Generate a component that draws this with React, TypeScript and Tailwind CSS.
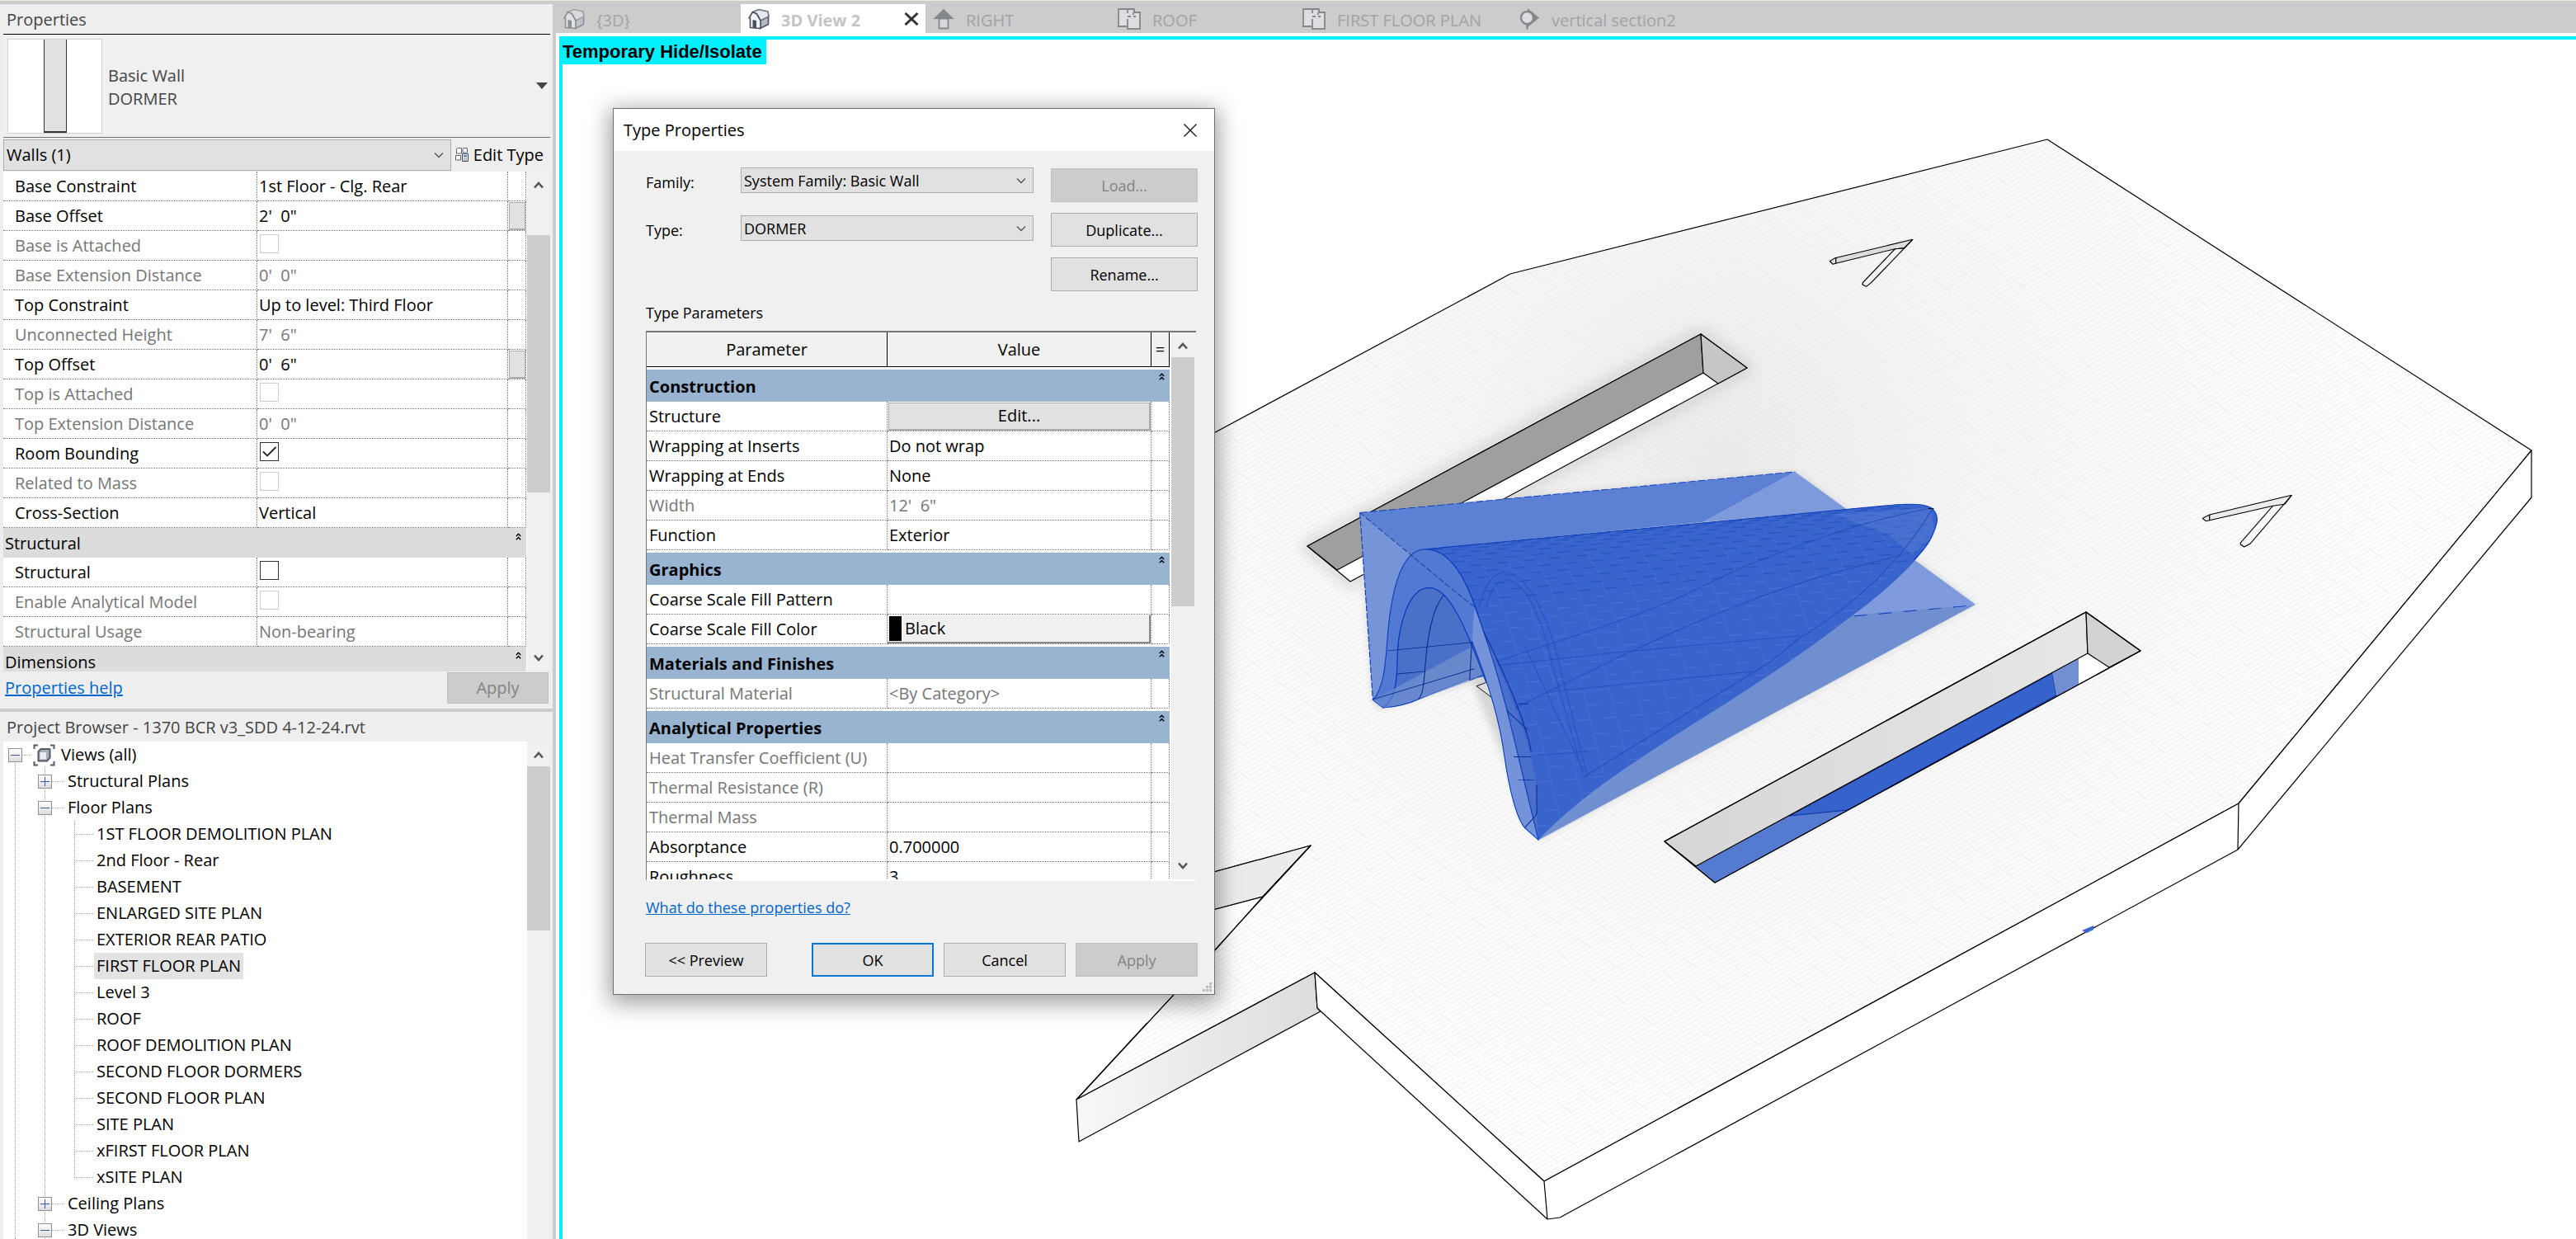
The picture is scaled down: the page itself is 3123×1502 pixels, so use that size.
import type { ReactNode } from 'react';

type Kind = 'text' | 'check' | 'button' | 'color' | 'section';

interface Param {
  name: string;
  value?: string;
  kind?: Kind;
  disabled?: boolean;
  checked?: boolean;
  /** Shows the small associate-parameter button at the row's end. */
  assoc?: boolean;
}

const INSTANCE_PARAMS: Param[] = [
  { name: 'Base Constraint', value: '1st Floor - Clg. Rear' },
  { name: 'Base Offset', value: `2'  0"`, assoc: true },
  { name: 'Base is Attached', kind: 'check', disabled: true },
  { name: 'Base Extension Distance', value: `0'  0"`, disabled: true },
  { name: 'Top Constraint', value: 'Up to level: Third Floor' },
  { name: 'Unconnected Height', value: `7'  6"`, disabled: true },
  { name: 'Top Offset', value: `0'  6"`, assoc: true },
  { name: 'Top is Attached', kind: 'check', disabled: true },
  { name: 'Top Extension Distance', value: `0'  0"`, disabled: true },
  { name: 'Room Bounding', kind: 'check', checked: true },
  { name: 'Related to Mass', kind: 'check', disabled: true },
  { name: 'Cross-Section', value: 'Vertical' },
  { name: 'Structural', kind: 'section' },
  { name: 'Structural', kind: 'check' },
  { name: 'Enable Analytical Model', kind: 'check', disabled: true },
  { name: 'Structural Usage', value: 'Non-bearing', disabled: true },
  { name: 'Dimensions', kind: 'section' },
];

const TYPE_PARAMS: Param[] = [
  { name: 'Construction', kind: 'section' },
  { name: 'Structure', value: 'Edit...', kind: 'button' },
  { name: 'Wrapping at Inserts', value: 'Do not wrap' },
  { name: 'Wrapping at Ends', value: 'None' },
  { name: 'Width', value: `12'  6"`, disabled: true },
  { name: 'Function', value: 'Exterior' },
  { name: 'Graphics', kind: 'section' },
  { name: 'Coarse Scale Fill Pattern' },
  { name: 'Coarse Scale Fill Color', value: 'Black', kind: 'color' },
  { name: 'Materials and Finishes', kind: 'section' },
  { name: 'Structural Material', value: '<By Category>', disabled: true },
  { name: 'Analytical Properties', kind: 'section' },
  { name: 'Heat Transfer Coefficient (U)', disabled: true },
  { name: 'Thermal Resistance (R)', disabled: true },
  { name: 'Thermal Mass', disabled: true },
  { name: 'Absorptance', value: '0.700000' },
  { name: 'Roughness', value: '3' },
];

const FLOOR_PLANS = [
  '1ST FLOOR DEMOLITION PLAN',
  '2nd Floor - Rear',
  'BASEMENT',
  'ENLARGED SITE PLAN',
  'EXTERIOR REAR PATIO',
  'FIRST FLOOR PLAN',
  'Level 3',
  'ROOF',
  'ROOF DEMOLITION PLAN',
  'SECOND FLOOR DORMERS',
  'SECOND FLOOR PLAN',
  'SITE PLAN',
  'xFIRST FLOOR PLAN',
  'xSITE PLAN',
];

const DOTS_H =
  'bg-[repeating-linear-gradient(90deg,#999_0_1px,transparent_1px_2px)] h-px';
const DOTS_V =
  'bg-[repeating-linear-gradient(180deg,#999_0_1px,transparent_1px_2px)] w-px';

/* ---------- small icons ---------- */

function Chevron({ up }: { up?: boolean }) {
  return (
    <svg viewBox="0 0 12 9" className="h-[9px] w-3" fill="none" aria-hidden="true">
      <path d={up ? 'M1 7.5 6 2l5 5.5' : 'M1 1.5 6 7l5-5.5'} stroke="#555" strokeWidth="2.6" />
    </svg>
  );
}

function DoubleUp() {
  return (
    <svg viewBox="0 0 7 9" className="h-[9px] w-[7px]" fill="none" aria-hidden="true">
      <path d="M.8 4 3.5 1.2 6.2 4M.8 8.2 3.5 5.4l2.7 2.8" stroke="#000" strokeWidth="1.4" />
    </svg>
  );
}

function HouseIcon({ faded }: { faded?: boolean }) {
  return (
    <svg viewBox="0 0 26 26" className={`h-[26px] w-[26px] shrink-0 ${faded ? 'opacity-50' : ''}`} aria-hidden="true">
      <path d="M14.5 14 24.5 9V19.5L14.5 24.5Z" fill="#b4bac6" stroke="#4a5260" strokeWidth="1.6" />
      <path d="M5.5 4.5 13 1.5 24 4 25 10 15 15 10.5 7Z" fill="#e6e8ed" stroke="#6c7482" strokeWidth="1.6" strokeLinejoin="round" />
      <path d="M1 12 5.5 4.5 10.5 7 15 15V24.5L2.5 23.5V12Z" fill="#f4f5f7" stroke="#4a5260" strokeWidth="1.6" strokeLinejoin="round" />
      <path d="M5.500 23.500V14L10 15V24Z" fill="#4a5260" />
    </svg>
  );
}

function ElevationIcon() {
  return (
    <svg viewBox="0 0 26 26" className="h-[26px] w-[26px] shrink-0" aria-hidden="true">
      <path d="M13 .8 25.5 13H.5Z" fill="#85888d" />
      <path d="M7.5 12.5H18.5V24.5H7.5Z" fill="#d5d7db" stroke="#85888d" strokeWidth="1.8" />
    </svg>
  );
}

function PlanIcon() {
  return (
    <svg viewBox="0 0 28 26" className="h-[26px] w-7 shrink-0" fill="none" aria-hidden="true">
      <path d="M1 1H20V5H27V25H12V22H1Z" fill="#dcdde0" stroke="#85888d" strokeWidth="1.8" />
      <path d="M12 22V13M12 2v4M12 10h4M19 10h3M19 5V8" stroke="#85888d" strokeWidth="1.8" />
    </svg>
  );
}

function SectionIcon() {
  return (
    <svg viewBox="0 0 26 26" className="h-[26px] w-[26px] shrink-0" aria-hidden="true">
      <path d="M11 0 25 11.500 11 23Z" fill="#85888d" />
      <circle cx="10.500" cy="11.500" r="7.500" fill="#dcdde0" stroke="#85888d" strokeWidth="2.400" />
      <path d="M10.500 19v6.500" stroke="#85888d" strokeWidth="2.400" />
    </svg>
  );
}

function EditTypeIcon() {
  return (
    <svg viewBox="0 0 17 17" className="h-[17px] w-[17px]" fill="#fff" stroke="#5b6472" aria-hidden="true">
      <path d="M1.500 1.500 3 .500h4.500V7h-6ZM9.500.500h5V6h-5.500V1.500ZM.500 9.500h6V15h-6Z" />
      <path d="M8.500 7.500h7v9h-7Z" stroke="#3d4654" />
      <path d="M10 9.200h4v2h-4Z" fill="#3b6fc4" stroke="none" />
      <path d="M10 13h1.500M12.500 13H14M10 15h1.500M12.500 15H14" stroke="#3d4654" />
    </svg>
  );
}

function ViewsIcon() {
  return (
    <svg viewBox="0 0 27 27" className="h-[27px] w-[27px]" fill="none" aria-hidden="true">
      <path d="M1.500 6V1.500H6M21 1.500h4.500V6M25.500 21v4.500H21M6 25.500H1.500V21" stroke="#555c66" strokeWidth="2" />
      <path d="M6.500 9 9.500 6H20.500V16.500L17 20.500H6.500Z" fill="#a9afb8" stroke="#555c66" strokeWidth="2" strokeLinejoin="round" />
      <path d="M8.500 10H16V18.500H8.500Z" fill="#e9ebee" />
    </svg>
  );
}

/* ---------- shared controls ---------- */

function ScrollBar({ thumb, openEnd }: { thumb: string; openEnd?: boolean }) {
  return (
    <div className="relative flex w-7 shrink-0 flex-col items-center justify-between bg-[#f0f0f0] py-3">
      <Chevron up />
      <div className={`absolute inset-x-0 bg-[#cdcdcd] ${thumb}`} />
      {!openEnd && <Chevron />}
    </div>
  );
}

function PushButton({
  children,
  disabled,
  primary,
  className = '',
}: {
  children: ReactNode;
  disabled?: boolean;
  primary?: boolean;
  className?: string;
}) {
  const look = disabled
    ? 'border border-[#bfbfbf] bg-[#cccccc] text-[#838383]'
    : primary
      ? 'border-2 border-[#0078d7] bg-[#e1e1e1]'
      : 'border border-[#adadad] bg-[#e1e1e1]';
  return (
    <button type="button" disabled={disabled} className={`flex h-[41px] items-center justify-center ${look} ${className}`}>
      {children}
    </button>
  );
}

function Picker({ id, label, value, className = '' }: { id: string; label?: string; value: string; className?: string }) {
  return (
    <div className={`relative ${className}`}>
      <select
        id={id}
        aria-label={label}
        defaultValue={value}
        className="h-full w-full appearance-none border border-[#adadad] bg-[#e1e1e1] pl-[3px] text-black"
      >
        <option>{value}</option>
      </select>
      <svg viewBox="0 0 12 8" className="pointer-events-none absolute inset-y-0 right-[9px] my-auto h-2 w-3" fill="none" aria-hidden="true">
        <path d="M1 1.500 6 6.500l5-5" stroke="#555" strokeWidth="1.400" />
      </svg>
    </div>
  );
}

function CheckBox({ id, param }: { id: string; param: Param }) {
  return (
    <span className="relative -top-0.5 ml-[3px] block h-[23px] w-[23px]">
      <input
        id={id}
        type="checkbox"
        defaultChecked={param.checked}
        disabled={param.disabled}
        className={`peer block h-[23px] w-[23px] appearance-none border bg-white ${
          param.disabled ? 'border-[#cccccc]' : 'border-[#333333]'
        }`}
      />
      <svg viewBox="0 0 23 23" className="pointer-events-none absolute inset-0 hidden h-[23px] w-[23px] peer-checked:block" fill="none" aria-hidden="true">
        <path d="M4 11.500 9 16.500 19.500 6" stroke="#222" strokeWidth="1.800" />
      </svg>
    </span>
  );
}

/* ---------- properties palette ---------- */

const DOT_CELL = 'border-b border-r border-dotted border-[#777]';

function InstanceTable() {
  return (
    <table className="w-full table-fixed border-separate border-spacing-0">
      <colgroup>
        <col className="w-[308px]" />
        <col />
        <col className="w-[22px]" />
      </colgroup>
      <tbody>
        {INSTANCE_PARAMS.map((p, i) => {
          const id = `instance-${i}`;
          if (p.kind === 'section') {
            return (
              <tr key={id}>
                <th colSpan={3} scope="rowgroup" className="h-9 bg-[#dcdcdc] p-0 text-left font-normal">
                  <div className="flex justify-between pl-0.5 pr-1.5">
                    <span className="pt-0.5 leading-8">{p.name}</span>
                    <span className="pt-[5px]">
                      <DoubleUp />
                    </span>
                  </div>
                </th>
              </tr>
            );
          }
          return (
            <tr key={id} className={p.disabled ? 'text-[#767676]' : ''}>
              <th scope="row" className={`h-9 p-0 pl-3.5 text-left font-normal ${DOT_CELL}`}>
                {p.kind === 'check' ? <label htmlFor={id}>{p.name}</label> : p.name}
              </th>
              <td className={`h-9 whitespace-pre p-0 ${DOT_CELL}`}>
                {p.kind === 'check' ? <CheckBox id={id} param={p} /> : <span className="ml-0.5">{p.value}</span>}
              </td>
              <td className={`h-9 p-0 ${DOT_CELL}`}>
                {p.assoc && (
                  <button type="button" aria-label={`Associate ${p.name}`} className="ml-px block h-[34px] w-5 border border-b-2 border-[#adadad] bg-[#e1e1e1]" />
                )}
              </td>
            </tr>
          );
        })}
      </tbody>
    </table>
  );
}

function PropertiesPalette() {
  return (
    <section className="pb-[5px] pl-1 pr-[3px]">
      <h2 className="h-9 pl-1 leading-[38px] text-[#444]">Properties</h2>
      <button type="button" className="flex h-[126px] w-full items-center border-b border-t border-b-[#707070] border-t-black bg-[#f0f0f0] text-left text-[#444]">
        <span className="ml-[5px] flex h-[115px] w-[115px] justify-center border border-[#cfcfcf] bg-white">
          <span className="h-full w-7 border-x border-b-2 border-[#333] bg-[#e1e1e1]" />
        </span>
        <span className="ml-[7px] flex-1 pt-1 leading-7">
          Basic Wall
          <br />
          DORMER
        </span>
        <svg viewBox="0 0 14 8" className="mr-[3px] h-2 w-3.5" aria-hidden="true">
          <path d="M0 0H14L7 8Z" fill="#444" />
        </svg>
      </button>
      <div className="flex h-[41px] items-center">
        <Picker id="category" label="Category" value="Walls (1)" className="h-[38px] flex-1" />
        <button type="button" className="flex items-center gap-[5px] pl-[5px] pr-2">
          <EditTypeIcon />
          Edit Type
        </button>
      </div>
      <div className="flex h-[606px] overflow-hidden">
        <div className="flex-1 overflow-hidden bg-white pr-px">
          <InstanceTable />
        </div>
        <ScrollBar thumb="top-[77px] h-[312px]" />
      </div>
      <div className="flex h-10 items-center justify-between">
        <a href="#help" className="ml-0.5 text-[#0066cc] underline">
          Properties help
        </a>
        <button type="button" disabled className="mr-0.5 h-[38px] w-[123px] border border-[#bfbfbf] bg-[#cccccc] text-[#838383]">
          Apply
        </button>
      </div>
    </section>
  );
}

/* ---------- project browser ---------- */

function Expander({ open }: { open?: boolean }) {
  return (
    <button
      type="button"
      aria-label={open ? 'Collapse' : 'Expand'}
      className="relative z-10 flex h-[17px] w-[17px] shrink-0 items-center justify-center border border-[#919191] bg-linear-to-b from-white to-[#dcdcdc]"
    >
      <svg viewBox="0 0 11 11" className="h-[11px] w-[11px]" aria-hidden="true">
        <path d={open ? 'M0 5.500H11' : 'M0 5.500H11M5.500 0V11'} stroke="#3b57a6" strokeWidth="1" />
      </svg>
    </button>
  );
}

function Branch({ name, open, children }: { name: string; open?: boolean; children?: ReactNode }) {
  return (
    <li>
      <div className="flex h-8 items-center">
        <Expander open={open} />
        <span className={`${DOTS_H} w-4`} />
        <span className="pl-[3px]">{name}</span>
      </div>
      {children}
    </li>
  );
}

function ProjectBrowser() {
  return (
    <section className="flex min-h-0 flex-1 flex-col border-t-4 border-[#cccccc] pl-1 pr-[3px]">
      <h2 className="h-9 shrink-0 pl-1 leading-[38px] text-[#444]">Project Browser - 1370 BCR v3_SDD 4-12-24.rvt</h2>
      <div className="flex min-h-0 flex-1">
        <div className="flex-1 overflow-hidden bg-white">
          <div className="ml-1.5 flex h-8 items-center">
            <Expander open />
            <span className={`${DOTS_H} mr-0.5 w-[11px]`} />
            <ViewsIcon />
            <span className="ml-[7px]">Views (all)</span>
          </div>
          <div className="relative ml-1.5 pl-9">
            <div className={`${DOTS_V} absolute -top-1.5 left-2 h-[620px]`} />
            <div className={`${DOTS_V} absolute -top-0.5 left-11 h-[610px]`} />
            <ul>
              <Branch name="Structural Plans" />
              <Branch name="Floor Plans" open>
                <ul className="relative pl-11">
                  <div className={`${DOTS_V} absolute left-11 top-0 h-[432px]`} />
                  {FLOOR_PLANS.map((name) => (
                    <li key={name} className="flex h-8 items-center">
                      <span className={`${DOTS_H} w-6`} />
                      <span className={`px-[3px] leading-8 ${name === 'FIRST FLOOR PLAN' ? 'bg-[#e3e3e3]' : ''}`}>{name}</span>
                    </li>
                  ))}
                </ul>
              </Branch>
              <Branch name="Ceiling Plans" />
              <Branch name="3D Views" open />
            </ul>
          </div>
        </div>
        <ScrollBar thumb="top-[30px] h-[199px]" openEnd />
      </div>
    </section>
  );
}

/* ---------- type properties dialog ---------- */

function TypeTable() {
  return (
    <table className="w-full table-fixed border-separate border-spacing-0">
      <colgroup>
        <col className="w-[292px]" />
        <col />
        <col className="w-[22px]" />
      </colgroup>
      <thead>
        <tr className="bg-[#f0f0f0]">
          <th className="h-[42px] border-b border-r border-black p-0 font-normal">Parameter</th>
          <th className="h-[42px] border-b border-r border-black p-0 font-normal">Value</th>
          <th className="h-[42px] border-b border-r border-black p-0 font-normal">=</th>
        </tr>
      </thead>
      <tbody>
        {TYPE_PARAMS.map((p) =>
          p.kind === 'section' ? (
            <tr key={p.name}>
              <th colSpan={3} scope="rowgroup" className="h-[42px] border-t-[3px] border-white bg-[#99b4d1] p-0 text-left font-bold">
                <div className="flex justify-between pl-[3px] pr-1.5">
                  <span className="pt-[3px] leading-9">{p.name}</span>
                  <span className="pt-1">
                    <DoubleUp />
                  </span>
                </div>
              </th>
            </tr>
          ) : (
            <tr key={p.name} className={p.disabled ? 'text-[#767676]' : ''}>
              <th scope="row" className={`h-9 p-0 pl-[3px] text-left font-normal ${DOT_CELL}`}>
                {p.name}
              </th>
              <td className={`h-9 whitespace-pre p-0 ${DOT_CELL}`}>
                {p.kind === 'button' && (
                  <button type="button" className="ml-px block h-[34px] w-[318px] border border-b-2 border-r-2 border-[#adadad] bg-[#e1e1e1]">
                    {p.value}
                  </button>
                )}
                {p.kind === 'color' && (
                  <button type="button" className="flex h-[34px] w-full items-center gap-1 border-b-2 border-r-2 border-[#8a8a8a] bg-[#f0f0f0] pl-0.5">
                    <span className="h-[30px] w-[15px] bg-black" />
                    {p.value}
                  </button>
                )}
                {!p.kind && <span className="ml-0.5">{p.value}</span>}
              </td>
              <td className={`h-9 p-0 ${DOT_CELL}`} />
            </tr>
          ),
        )}
      </tbody>
    </table>
  );
}

function TypePropertiesDialog() {
  return (
    <div
      role="dialog"
      aria-label="Type Properties"
      className="absolute left-[65px] top-[87px] w-[730px] border border-[#707070] bg-[#f0f0f0] shadow-[0_6px_26px_4px_rgba(0,0,0,0.38)]"
    >
      <div className="flex h-[51px] items-center justify-between bg-white pl-3 pr-[21px]">
        <h2>Type Properties</h2>
        <button type="button" aria-label="Close">
          <svg viewBox="0 0 16 16" className="h-4 w-4" aria-hidden="true">
            <path d="M.5.5l15 15M15.500.5l-15 15" stroke="#111" strokeWidth="1.300" />
          </svg>
        </button>
      </div>
      <div className="px-[39px] pr-5 pt-5 text-[18px]">
        <div className="flex justify-between">
          <div className="grid grid-cols-[115px_355px] content-start gap-y-[27px]">
            <label htmlFor="family" className="leading-9">
              Family:
            </label>
            <Picker id="family" value="System Family: Basic Wall" className="h-[31px]" />
            <label htmlFor="type" className="leading-[26px]">
              Type:
            </label>
            <Picker id="type" value="DORMER" className="-mt-[5px] h-[31px]" />
          </div>
          <div className="grid w-[178px] gap-y-[13px] pt-px">
            <PushButton disabled>Load...</PushButton>
            <PushButton>Duplicate...</PushButton>
            <PushButton>Rename...</PushButton>
          </div>
        </div>
        <p className="mb-2 mt-3 leading-7">Type Parameters</p>
        <div className="mr-0.5 flex h-[667px] overflow-hidden border-b-2 border-l border-t-2 border-b-white border-l-[#777] border-t-[#777] pr-0.5 text-[20px]">
          <div className="flex-1 overflow-hidden bg-white pr-0.5">
            <TypeTable />
          </div>
          <ScrollBar thumb="top-[30px] h-[302px]" />
        </div>
        <a href="#type-help" className="mt-[18px] inline-block leading-7 text-[#0066cc] underline">
          What do these properties do?
        </a>
        <div className="-ml-px mt-[29px] flex gap-3">
          <PushButton className="w-[148px]">&lt;&lt; Preview</PushButton>
          <PushButton primary className="ml-auto w-[148px]">
            OK
          </PushButton>
          <PushButton className="w-[148px]">Cancel</PushButton>
          <PushButton disabled className="w-[148px]">
            Apply
          </PushButton>
        </div>
      </div>
      <div className="flex h-[21px] items-end justify-end p-[3px]">
        <svg viewBox="0 0 11 11" className="h-[11px] w-[11px]" fill="#bbb" aria-hidden="true">
          <path d="M8 0h3v3H8ZM4 4h3v3H4ZM8 4h3v3H8ZM0 8h3v3H0ZM4 8h3v3H4ZM8 8h3v3H8Z" />
        </svg>
      </div>
    </div>
  );
}

/* ---------- 3D model ---------- */

type Pt = [number, number];

// Front edge of the shell from the ridge down to its foot, as two cubics.
const FRONT: Pt[][] = [
  [[300, 640], [365, 640], [400, 760], [424, 860]],
  [[424, 860], [475, 1040], [505, 1240], [544, 1430]],
];

function cubic([a, b, c, d]: Pt[], t: number): Pt {
  const u = 1 - t;
  const f = (i: 0 | 1) => u * u * u * a[i] + 3 * u * u * t * b[i] + 3 * u * t * t * c[i] + t * t * t * d[i];
  return [f(0), f(1)];
}

const FRONT_PTS: Pt[] = FRONT.flatMap((seg) => Array.from({ length: 15 }, (_, i) => cubic(seg, i / 15)));

const COURSE: Pt = [57, -6.5];
const COURSES = Array.from({ length: 18 }, (_, i) => i);
const SHELL =
  'M300 640 1300 521C1340 516 1375 515 1392 527 1412 548 1406 572 1392 610 1362 680 1290 756 1215 828 1050 985 920 1080 820 1162 700 1260 620 1330 544 1430 505 1240 475 1040 424 860 400 760 365 640 300 640Z';

function Model() {
  return (
    <svg
      viewBox="678 44 2445 1458"
      preserveAspectRatio="xMinYMin slice"
      className="absolute inset-0 h-full w-full"
      fill="none"
      stroke="#000"
      strokeWidth="1.2"
      strokeLinejoin="round"
      role="img"
      aria-label="Dormer model"
    >
      <defs>
        <radialGradient id="roof" gradientUnits="userSpaceOnUse" cx="2090" cy="560" r="820">
          <stop offset="0" stopColor="#ebebeb" />
          <stop offset=".35" stopColor="#f5f5f5" />
          <stop offset=".7" stopColor="#fbfbfb" />
          <stop offset="1" stopColor="#fefefe" />
        </radialGradient>
        <linearGradient id="side" x1="0" x2="1">
          <stop offset="0" stopColor="#f8f8f8" />
          <stop offset="1" stopColor="#dcdcdc" />
        </linearGradient>
        <linearGradient id="slot" x1="0" x2="1">
          <stop offset="0" stopColor="#d6d6d6" />
          <stop offset="1" stopColor="#e6e6e6" />
        </linearGradient>
        <pattern id="shingle" width="28" height="40" patternUnits="userSpaceOnUse" patternTransform="matrix(1 -.54 .9 .68 0 0)">
          <path d="M0 0V20M14 20V40" stroke="#e2e2e2" strokeWidth=".7" />
          <path d="M2 3H26M4 8H27M1 13H25M3 18H26M0 23H12M16 23H28M0 28H11M17 28H28M0 33H12M15 33H28M0 38H10M16 38H28" stroke="#e8e8e8" strokeWidth=".7" />
        </pattern>
        <clipPath id="shellClip">
          <path d={SHELL} />
        </clipPath>
        <filter id="soft" x="-20%" y="-20%" width="140%" height="140%">
          <feGaussianBlur stdDeviation="9" />
        </filter>
      </defs>

      {/* roof slab */}
      <path d="M1305 1333 1589 1025 1300 1104V617L1831 332 2482 169 3069 546 2714 974 1872 1432 1594 1179Z" fill="url(#roof)" stroke="none" />
      <path d="M1305 1333 1589 1025 1300 1104V617L1831 332 2482 169 3069 546 2714 974 1872 1432 1594 1179Z" fill="url(#shingle)" />
      <path d="M1589 1025 1300 1104V1148L1531 1087Z" fill="#ebebeb" />
      <path d="M1531 1087 1300 1148V1240H1391Z" fill="#fff" stroke="none" />
      <path d="M1305 1333 1422 1207 1473 1152 1531 1087 1589 1025M1531 1087 1300 1148" />
      <path d="M1305 1333 1594 1179 1597 1222 1601 1226 1308 1384Z" fill="url(#side)" />
      <path d="M1594 1179 1872 1432 1876 1478 1597 1222ZM1872 1432 2714 974 2713 1030 1891 1476 1876 1478ZM2714 974 3069 546V603L2713 1030Z" fill="#fff" />
      <path d="M2524 1128 2538 1122V1127L2530 1131Z" fill="#3a66cf" stroke="none" />

      {/* upper slot */}
      <path d="M2062 405 2118 446 1637 705 1585 662Z" stroke="#999" strokeWidth="14" opacity=".35" filter="url(#soft)" />
      <path d="M2062 405 2118 446 1637 705 1585 662Z" fill="#fff" />
      <path d="M2062 405 2065 452 1621 691 1585 662Z" fill="#9f9f9f" />
      <path d="M2062 405 2118 446 2083 465 2065 452Z" fill="#c6c6c6" />

      {/* lower slot */}
      <path d="M2529 742 2595 789 2079 1070 2018 1020Z" fill="#fff" />
      <path d="M2056 1050 2520 798V829L2079 1070Z" fill="#557bd0" stroke="none" />
      <path d="M2169 989 2488 816 2493 843 2240 982Z" fill="#3562cb" stroke="#0a2f9c" />
      <path d="M2488 816 2520 798V829L2493 843Z" fill="#7190d2" stroke="none" />
      <path d="M2529 742 2531 792 2056 1050 2018 1020Z" fill="url(#slot)" />
      <path d="M2529 742 2595 789 2557 809 2531 792Z" fill="#d2d2d2" />
      <path d="M2529 742 2595 789 2079 1070 2018 1020Z" />

      {/* small tick-shaped cuts */}
      <g transform="translate(2180 260) scale(.40816 .33333)" strokeWidth="3">
        <path d="M340 91 110 158 94 170 103 181 112 178 288 125 315 122Z" fill="#dcdcdc" />
        <path d="M340 91 217 248 202 262 191 255 192 248 288 125 315 122M112 158V178" />
        <path d="M1466 1021 1222 1092 1201 1105 1211 1115 1222 1112 1410 1060 1445 1054Z" fill="#ececec" />
        <path d="M1466 1021 1343 1197 1325 1209 1314 1200V1194L1410 1060M1222 1092V1112" />
      </g>

      {/* selected dormer */}
      <g transform="translate(1560 380) scale(.5612 .4464)" stroke="#0a3cc0" strokeWidth="2">
        <path d="M158 541 1098 430 1488 790 544 1430 400 1000 200 1075 186 1050Z" fill="#999" stroke="none" opacity=".35" filter="url(#soft)" />
        <path d="M410 1012 435 1000 445 1045Z" fill="#ddd" stroke="#222" />
        <path d="M158 541 1098 430 900 566 300 640 270 655 400 840 400 905 186 1050Z" fill="#5b80d4" stroke="none" />
        <path d="M158 541 270 655C225 740 222 850 218 915 212 970 205 1020 186 1050Z" fill="#7694d8" stroke="none" />
        <path d="M1098 430 1210 532 900 566Z" fill="#7d9adc" stroke="none" />
        <path d="M1355 668 1488 790 1225 820Z" fill="#7f9bdd" stroke="none" />
        <path d="M1225 818 1488 790 544 1430C620 1330 700 1260 820 1162 920 1080 1090 950 1225 818Z" fill="#708fd1" stroke="none" />
        <path d="M158 541 1098 430M158 541 186 1050" strokeDasharray="16 5" />

        {/* arch thickness and inner void */}
        <path d="M186 1050C215 1010 214 920 219 860 228 740 250 640 300 640 365 640 400 760 424 860L430 1000C385 850 350 745 308 745 262 745 240 850 239 940 238 1000 235 1050 208 1071Z" fill="#527ad3" />
        <path d="M208 1071C235 1050 238 1000 239 940 240 850 262 745 308 745 350 745 385 850 415 950L425 985 395 992 290 1045Q250 1068 208 1071Z" fill="#466cc4" fillOpacity=".8" />
        <path d="M186 1050 400 905 425 985 290 1045 208 1071Z" fill="#6c8cd0" fillOpacity=".65" stroke="none" />
        <path d="M284 1048C300 1030 296 960 305 890 312 830 325 785 340 764M239 979 298 972M400 890 395 996M186 1048 405 965M218 916 400 893" stroke="#0a2c90" />
        <path d="M158 541 370 762 470 860 518 910V935L395 996" stroke="#1c3f9e" strokeDasharray="14 5" />

        <path d={SHELL} fill="#3864cc" stroke="none" />
        <g clipPath="url(#shellClip)">
          {COURSES.map((k) => (
            <g key={k} transform={`translate(${COURSE[0] * (k + 1)} ${COURSE[1] * (k + 1)})`}>
              <polyline points={FRONT_PTS.map((p) => p.join(',')).join(' ')} stroke="#5378d2" strokeOpacity=".7" strokeWidth="1.500" />
              {FRONT_PTS.map(([x, y], i) => (
                <path
                  key={i}
                  d={`M${x - (i % 2 ? 57 : 28)} ${y + (i % 2 ? 7 : 3)}l28 -3`}
                  stroke={i < 12 ? '#1d4dc0' : '#5c80d8'}
                  strokeOpacity=".75"
                  strokeWidth={i < 12 ? 2.500 : 1.500}
                />
              ))}
            </g>
          ))}
          <path d="M1180 545 1392 527 1400 600 1350 655 1300 600Z" fill="#6d8fdc" fillOpacity=".3" stroke="none" />
          <path d="M420 960C600 880 760 830 900 740S1250 560 1396 528M480 1080C640 980 780 890 960 800S1230 690 1330 655M1396 528Q1350 620 1320 660 1240 780 1110 880L1040 950 640 1260M1110 875 700 922 410 962M1010 972 560 1028" stroke="#1b48b4" strokeOpacity=".8" />
          <path d="M415 800C430 720 455 700 475 703 530 715 570 850 590 960L650 1260M430 800C445 735 460 722 478 724 525 735 555 850 575 960L640 1250M540 1200 650 1190M515 905 640 1240" stroke="#214fbd" strokeOpacity=".8" />
        </g>
        <path d="M300 640 1300 521C1340 516 1375 515 1392 527 1412 548 1406 572 1392 610Q1380 640 1355 668" stroke="#0638b8" />
        <path d="M1225 822 1488 792" strokeDasharray="28 26" />
        <path d="M1386 530H1398" stroke="#000" />

        {/* front lip */}
        <path d="M400 890C440 1020 460 1110 470 1200 480 1290 496 1370 514 1397L544 1430C505 1240 475 1040 424 860L405 800Z" fill="#7593d8" stroke="none" />
        <path d="M400 890C440 1020 460 1110 470 1200 480 1290 496 1370 514 1397L544 1430" />
        <path d="M424 860C475 1040 505 1240 544 1430L540 1360V1290C530 1180 500 1080 424 860Z" fill="#4a70cb" stroke="none" />
        <path d="M300 640C365 640 400 760 424 860 475 1040 505 1240 544 1430" />
        <path d="M424 860C470 980 515 1100 528 1190M490 1204H528M500 1267H535M500 1060H522M514 1397 540 1360V1280M475 1078 520 1130" stroke="#0a2f9c" />
      </g>
    </svg>
  );
}

/* ---------- view tabs ---------- */

const TABS = [
  { name: '{3D}', icon: <HouseIcon faded /> },
  { name: '3D View 2', icon: <HouseIcon />, active: true },
  { name: 'RIGHT', icon: <ElevationIcon /> },
  { name: 'ROOF', icon: <PlanIcon /> },
  { name: 'FIRST FLOOR PLAN', icon: <PlanIcon /> },
  { name: 'vertical section2', icon: <SectionIcon /> },
];

function ViewTabs() {
  return (
    <nav className="flex h-[35px] bg-[#cccccc]">
      {TABS.map((tab) => (
        <button
          key={tab.name}
          type="button"
          className={`flex min-w-56 shrink-0 items-center pl-[9px] ${
            tab.active ? 'bg-white pr-2 font-bold text-[#c4c4c4]' : 'pr-9 text-[#a3a3a3]'
          }`}
        >
          {tab.icon}
          <span className="ml-3.5 mt-1 whitespace-nowrap">{tab.name}</span>
          {tab.active && (
            <svg viewBox="0 0 18 16" className="ml-auto h-4 w-[18px]" aria-hidden="true">
              <path d="M1.500 1 16.500 15M16.500 1 1.500 15" stroke="#333" strokeWidth="3" />
            </svg>
          )}
        </button>
      ))}
    </nav>
  );
}

export default function App() {
  return (
    <div className="flex h-screen flex-col overflow-hidden border-t border-[#e3efd9] bg-[#eeeeee] font-['Open_Sans','Noto_Sans',sans-serif] text-[20px] leading-7 text-black">
      <div className="h-1 shrink-0 bg-[#cccccc]" />
      <div className="flex min-h-0 flex-1">
        <aside className="flex w-[674px] shrink-0 flex-col border-r-4 border-[#cccccc]">
          <PropertiesPalette />
          <ProjectBrowser />
        </aside>
        <main className="flex min-w-0 flex-1 flex-col bg-white">
          <ViewTabs />
          <div className="relative ml-1 mt-1 flex-1 overflow-hidden">
            <Model />
            <div className="pointer-events-none absolute inset-0 border-l-4 border-t-4 border-[#00f0ff]" />
            <p className="absolute left-0 top-0 bg-[#00f0ff] pb-px pl-1 pr-[5px] pt-1 font-['Liberation_Sans',sans-serif] text-[22px] font-bold leading-[29px]">
              Temporary Hide/Isolate
            </p>
            <TypePropertiesDialog />
          </div>
        </main>
      </div>
    </div>
  );
}
